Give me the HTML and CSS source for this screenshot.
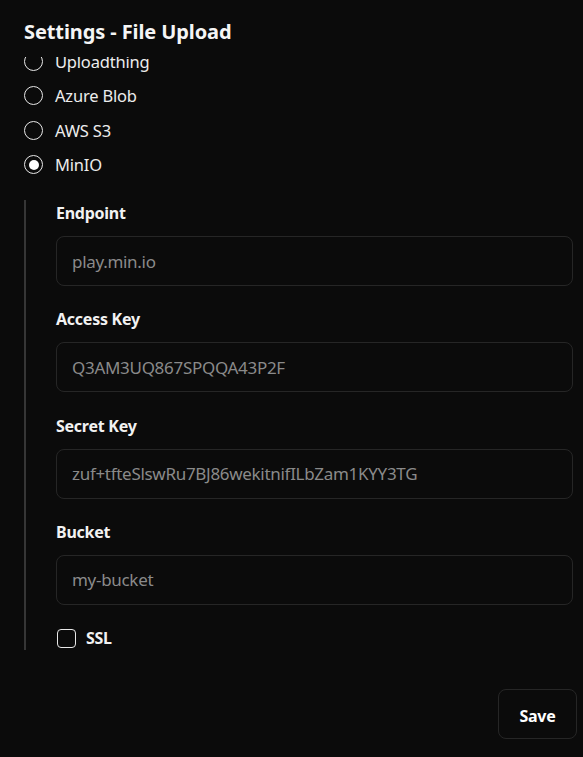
FILE: index.html
```html
<!DOCTYPE html>
<html lang="en">
<head>
<meta charset="utf-8">
<title>Settings - File Upload</title>
<link rel="stylesheet" href="styles.css">
</head>
<body>
<div class="app">
  <header class="header">
    <h1 class="title">Settings - File Upload</h1>
  </header>
  <main class="scroll">
    <div class="content">
      <div class="radios">
        <label class="radio-row"><span class="radio"></span><span class="radio-label">Uploadthing</span></label>
        <label class="radio-row"><span class="radio"></span><span class="radio-label">Azure Blob</span></label>
        <label class="radio-row"><span class="radio"></span><span class="radio-label">AWS S3</span></label>
        <label class="radio-row"><span class="radio checked"></span><span class="radio-label">MinIO</span></label>
      </div>
      <section class="group">
        <div class="field">
          <div class="field-label">Endpoint</div>
          <div class="input"><span class="placeholder">play.min.io</span></div>
        </div>
        <div class="field">
          <div class="field-label">Access Key</div>
          <div class="input"><span class="placeholder">Q3AM3UQ867SPQQA43P2F</span></div>
        </div>
        <div class="field">
          <div class="field-label">Secret Key</div>
          <div class="input"><span class="placeholder">zuf+tfteSlswRu7BJ86wekitnifILbZam1KYY3TG</span></div>
        </div>
        <div class="field">
          <div class="field-label">Bucket</div>
          <div class="input"><span class="placeholder">my-bucket</span></div>
        </div>
        <label class="check-row"><span class="checkbox"></span><span class="check-label">SSL</span></label>
      </section>
    </div>
  </main>
  <footer class="footer">
    <button class="save" type="button">Save</button>
  </footer>
</div>
</body>
</html>
```
FILE: styles.css
```css
* { box-sizing: border-box; }
html, body {
  margin: 0;
  padding: 0;
  background: #0b0b0b;
  color: #f2f2f2;
  font-family: "Noto Sans", "Open Sans", sans-serif;
}
.app {
  width: 583px;
  height: 757px;
  display: flex;
  flex-direction: column;
}
.header {
  height: 57px;
  padding: 16px 24px 0;
  flex: none;
}
.title {
  margin: 0;
  font-size: 20px;
  font-weight: 700;
  line-height: 32px;
  letter-spacing: -0.1px;
  color: #f5f5f5;
}
.scroll {
  flex: none;
  height: 615px;
  overflow: hidden;
  padding: 0 10px 0 24px;
}
.content {
  margin-top: -13px;
}
.radios {
  display: flex;
  flex-direction: column;
}
.radio-row {
  display: flex;
  align-items: center;
  gap: 12px;
  height: 34.5px;
}
.radio {
  width: 19px;
  height: 19px;
  border-radius: 50%;
  border: 1.5px solid #e8e8e8;
  display: flex;
  align-items: center;
  justify-content: center;
}
.radio.checked::after {
  content: "";
  width: 10px;
  height: 10px;
  border-radius: 50%;
  background: #ffffff;
}
.radio-label {
  font-size: 16.5px;
  color: #ededed;
  letter-spacing: -0.2px;
}
.group {
  margin-top: 18px;
  border-left: 2px solid #363636;
  padding: 0 0 2px 30px;
  display: flex;
  flex-direction: column;
}
.field {
  display: flex;
  flex-direction: column;
  margin-bottom: 20.3px;
}
.field-label {
  font-size: 16px;
  font-weight: 700;
  line-height: 26px;
  height: 24px;
  margin-bottom: 12px;
  letter-spacing: -0.25px;
  color: #f2f2f2;
}
.input {
  height: 50px;
  border: 1px solid #262626;
  border-radius: 8px;
  padding: 0 15px;
  display: flex;
  align-items: center;
}
.placeholder {
  font-size: 17px;
  color: #8a8a8a;
  letter-spacing: -0.3px;
}
.check-row {
  display: flex;
  align-items: center;
  gap: 10px;
  height: 20px;
  margin-top: 3px;
}
.checkbox {
  width: 19px;
  height: 19px;
  border: 1.5px solid #e8e8e8;
  border-radius: 4px;
  margin-left: 1px;
}
.check-label {
  font-size: 16px;
  font-weight: 700;
  letter-spacing: -0.3px;
}
.footer {
  flex: 1;
  display: flex;
  justify-content: flex-end;
  align-items: flex-start;
  padding: 17px 6px 0 0;
}
.save {
  width: 79px;
  height: 50px;
  padding: 4px 0 0;
  background: transparent;
  border: 1px solid #262626;
  border-radius: 8px;
  color: #ffffff;
  font-family: inherit;
  font-size: 16px;
  font-weight: 700;
  letter-spacing: -0.3px;
  cursor: pointer;
}
```
